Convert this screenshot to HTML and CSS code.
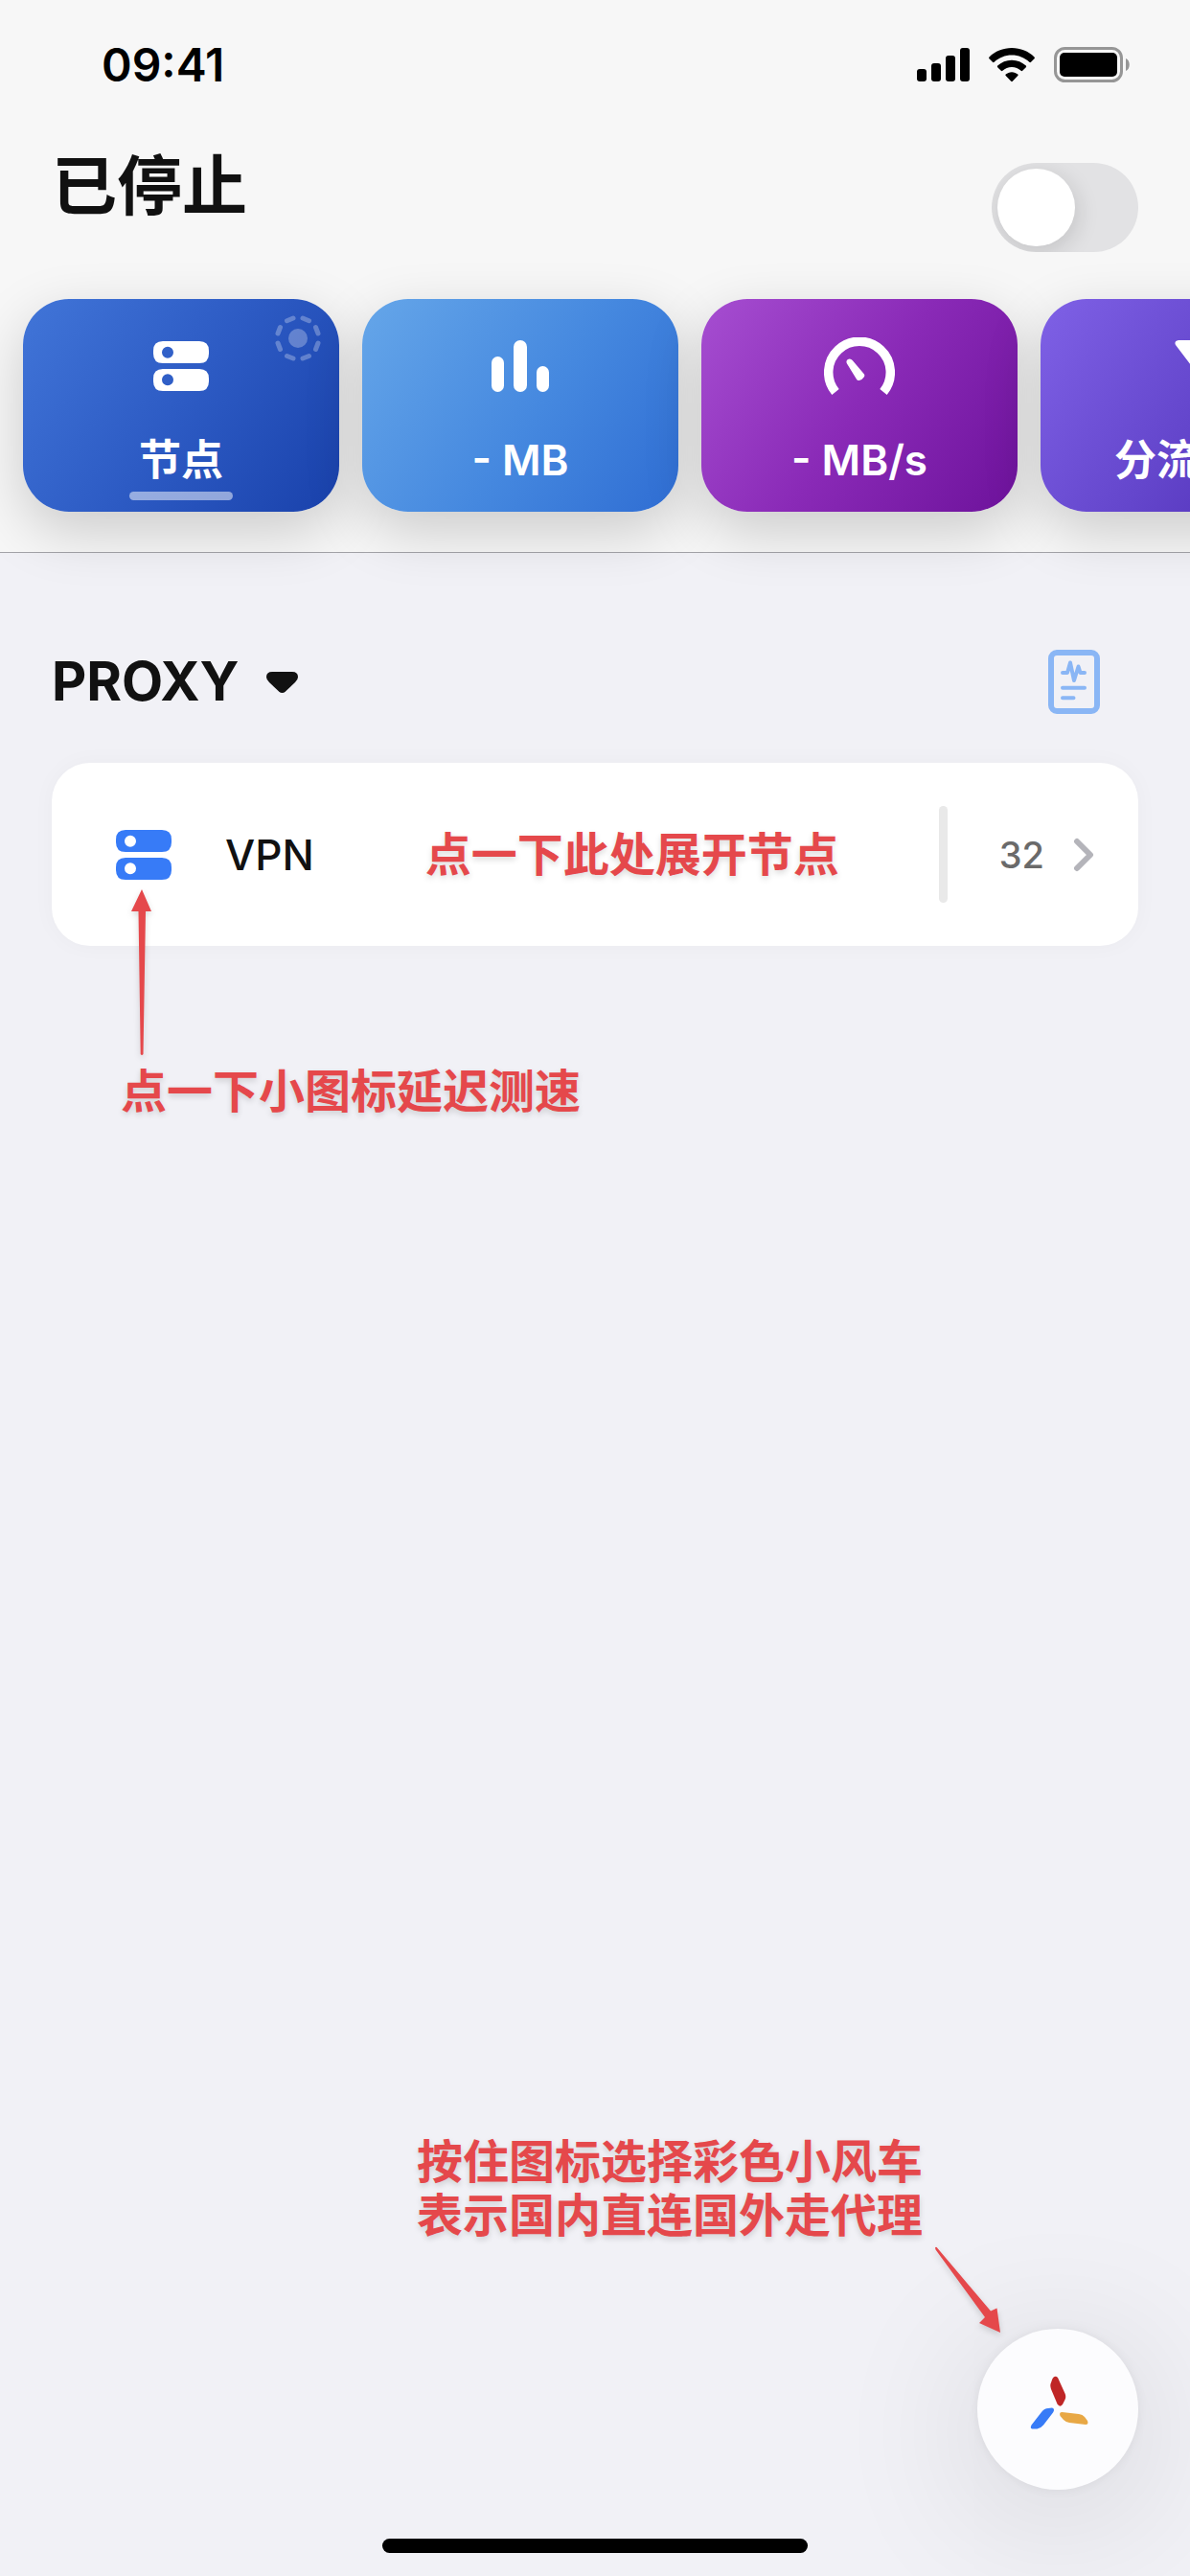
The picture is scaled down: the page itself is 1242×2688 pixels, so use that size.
FILE: index.html
```html
<!DOCTYPE html>
<html lang="zh-CN">
<head>
  <meta charset="UTF-8" />
  <meta name="viewport" content="width=device-width, initial-scale=1.0" />
  <title>节点</title>
  <link rel="stylesheet" href="styles.css">
</head>
<body>
  <header class="top">
    <div class="status-bar">
      <span class="time">09:41</span>
      <div class="status-icons">
        <svg width="55" height="36" viewBox="0 0 55 36">
          <rect x="0" y="22" width="10" height="13" rx="3" />
          <rect x="15" y="16" width="10" height="19" rx="3" />
          <rect x="30" y="8" width="10" height="27" rx="3" />
          <rect x="45" y="0" width="10" height="35" rx="3" />
        </svg>
        <svg width="48" height="36" viewBox="0 0 48 36">
          <path d="M24 0C33 0 41.500 3.500 47.500 9.500Q48.300 10.400 47.500 11.200L44 14.800Q43.200 15.500 42.300 14.800C37.400 10.200 31 7.600 24 7.600S10.600 10.200 5.700 14.800Q4.800 15.500 4 14.800L.5 11.200Q-.3 10.400.5 9.500C6.500 3.500 15 0 24 0Z" />
          <path d="M24 12.700C29.700 12.700 34.900 14.900 38.800 18.600Q39.600 19.400 38.800 20.200L35.200 23.800Q34.400 24.500 33.600 23.800C31 21.400 27.700 20 24 20S17 21.400 14.400 23.800Q13.600 24.500 12.800 23.800L9.200 20.200Q8.400 19.400 9.200 18.600C13.100 14.900 18.300 12.700 24 12.700Z" />
          <path d="M24 25.200C26.500 25.200 28.600 26.100 30.300 27.600Q31.100 28.300 30.300 29.100L24.800 34.800Q24 35.600 23.200 34.800L17.700 29.100Q16.900 28.300 17.700 27.600C19.400 26.100 21.500 25.200 24 25.200Z" />
        </svg>
        <svg width="80" height="38" viewBox="0 0 80 38">
          <rect x="1.500" y="1.500" width="69" height="34" rx="10" fill="none" stroke="#969696" stroke-width="3" />
          <rect x="6" y="6" width="60" height="25" rx="5" />
          <path d="M75 12C80 14 80 23 75 25Z" fill="#969696" />
        </svg>
      </div>
    </div>

    <div class="title-row">
      <label class="title" for="power">已停止</label>
      <input class="switch" type="checkbox" id="power" />
    </div>

    <nav class="tiles">
      <button class="tile tile-node active">
        <svg width="58" height="52" viewBox="0 0 58 52">
          <path fill="currentColor" fill-rule="evenodd" d="M10 0H48Q58 0 58 10V13Q58 23 48 23H10Q0 23 0 13V10Q0 0 10 0ZM15 5.700A6 6 0 1 0 15 17.700A6 6 0 1 0 15 5.700ZM10 29H48Q58 29 58 39V42Q58 52 48 52H10Q0 52 0 42V39Q0 29 10 29ZM15 34.200A6 6 0 1 0 15 46.200A6 6 0 1 0 15 34.200Z" />
        </svg>
        <span>节点</span>
        <svg class="badge" width="50" height="50" viewBox="0 0 50 50">
          <circle cx="25" cy="25" r="10" fill="currentColor" />
          <path d="M30 4L36.500 6.700M43.500 13.500L46 20M46 30L43.500 36.500M36.500 43.500L30 46M20 46L13.500 43.500M6.500 36.500L4 30M4 20L6.500 13.500M13.500 6.700L20 4" fill="none" stroke="currentColor" stroke-width="5" stroke-linecap="round" />
        </svg>
      </button>
      <button class="tile tile-traffic">
        <svg width="60" height="54" viewBox="0 0 60 54">
          <g fill="currentColor">
            <rect x="0" y="17" width="13" height="37" rx="6.500" />
            <rect x="23" y="0" width="14" height="54" rx="7" />
            <rect x="47" y="27" width="13" height="27" rx="6.500" />
          </g>
        </svg>
        <span>- MB</span>
      </button>
      <button class="tile tile-speed">
        <svg width="74" height="60" viewBox="0 0 74 60">
          <path d="M12 57A32.300 32.300 0 1 1 62 57" fill="none" stroke="currentColor" stroke-width="9.500" />
          <path d="M24 27.500Q22.500 24.800 24.900 23Q27.600 21.500 29.700 24L42 38.500Q43 40 41.700 41.500Q40 44.200 36.800 45Q35 45.500 34 43.800Z" fill="currentColor" />
        </svg>
        <span>- MB/s</span>
      </button>
      <button class="tile tile-rule">
        <svg width="50" height="54" viewBox="0 0 50 54">
          <path d="M4 0H46Q51 1 49 5L31 30V45L20 53V30L1 5Q-1 1 4 0Z" fill="currentColor" />
        </svg>
        <span>分流规则</span>
      </button>
    </nav>
  </header>

  <main>
    <div class="group-head">
      <button class="group-name">
        PROXY
        <svg width="33" height="22" viewBox="0 0 33 22">
          <path d="M6 0H27Q33 0 33 5.500Q33 8 30 11L20 20.500Q16.500 23.500 13 20.500L3 11Q0 8 0 5.500Q0 0 6 0Z" fill="currentColor" />
        </svg>
      </button>
      <button class="report" aria-label="诊断">
        <svg width="54" height="67" viewBox="0 0 54 67" fill="none" stroke="currentColor" stroke-linecap="round" stroke-linejoin="round">
          <rect x="3" y="3" width="48" height="61" rx="6" stroke-width="6" />
          <path d="M15 24H20L23 13.500L27 32L31.500 17.500L33.500 24H38M15 39.700H38M15 50.300H26.500" stroke-width="4" />
        </svg>
      </button>
    </div>

    <div class="card">
      <button class="ping" aria-label="延迟测速">
        <svg width="58" height="52" viewBox="0 0 58 52">
          <path fill="currentColor" fill-rule="evenodd" d="M10 0H48Q58 0 58 10V13Q58 23 48 23H10Q0 23 0 13V10Q0 0 10 0ZM15 5.700A6 6 0 1 0 15 17.700A6 6 0 1 0 15 5.700ZM10 29H48Q58 29 58 39V42Q58 52 48 52H10Q0 52 0 42V39Q0 29 10 29ZM15 34.200A6 6 0 1 0 15 46.200A6 6 0 1 0 15 34.200Z" />
        </svg>
      </button>
      <a class="node-link" href="#">
        <span class="node-name">VPN</span>
        <span class="note">点一下此处展开节点</span>
        <span class="bar"></span>
        <span class="count">32</span>
        <svg width="22" height="36" viewBox="0 0 22 36">
          <path d="M4 4L18 18L4 32" fill="none" stroke="#b4b4ba" stroke-width="6" stroke-linecap="round" stroke-linejoin="round" />
        </svg>
      </a>
    </div>

    <p class="note note-ping">
      点一下小图标延迟测速
      <svg class="arrow" width="24" height="176" viewBox="0 0 24 176">
        <path d="M12 1L22 24H16L13.500 173Q12 175 10.700 173L8.500 24H1Z" fill="currentColor" />
      </svg>
    </p>
  </main>

  <footer>
    <p class="note note-mode">
      按住图标选择彩色小风车<br>
      表示国内直连国外走代理
      <svg class="arrow" width="72" height="92" viewBox="0 0 72 92">
        <path d="M1 1.500Q2 0 3.500 2L59 67.500L65.500 64.500L69 90L47 80L53 74L1.500 3.500Z" fill="currentColor" />
      </svg>
    </p>
    <button class="fab" aria-label="模式">
      <svg width="62" height="58" viewBox="0 0 62 58">
        <path d="M23.500 3Q26 -1 29 2L36.500 18.500Q38 22 36.500 25L34 30Q31 33.500 28.500 29.500L22 14Q21 11 21.500 8.500Z" fill="#bf2626" />
        <path d="M12 38Q15 34 19 34L23 33.500Q26.500 34.500 24 38.500L14 51.500Q11 55 7.500 55.500H3Q-.5 56 1.500 51.500Z" fill="#377bf7" />
        <path d="M33.500 38L51 40Q55 40.500 57 43L60 47Q61.500 51 58 51L41 49Q37.500 48.500 35 46L31.500 42Q30 38 33.500 38Z" fill="#e8a845" />
      </svg>
    </button>
    <div class="home-bar"></div>
  </footer>
</body>
</html>
```
FILE: styles.css
```css
* { margin: 0; padding: 0; box-sizing: border-box; }
body {
  min-height: 100vh;
  display: flex;
  flex-direction: column;
  background: #f1f1f6;
  color: #111;
  font-family: Inter, "Noto Sans CJK SC", sans-serif;
  overflow-x: hidden;
}
svg { display: block; flex: none; }
button {
  background: none;
  border: none;
  color: inherit;
  font: inherit;
  cursor: pointer;
}

.top {
  background: #f7f7f7;
  border-bottom: 1px solid #a4a4a9;
  padding-bottom: 42px;
}
.status-bar {
  display: flex;
  justify-content: space-between;
  align-items: center;
  padding: 38px 62px 0 106px;
  color: #000;
}
.time {
  font-size: 48px;
  font-weight: 600;
  line-height: 60px;
}
.status-icons {
  display: flex;
  align-items: center;
  gap: 20px;
}
.title-row {
  display: flex;
  justify-content: space-between;
  align-items: flex-start;
  height: 214px;
  padding: 54px 54px 0;
}
.title {
  font-size: 68px;
  font-weight: 600;
  line-height: 84px;
}
.switch {
  appearance: none;
  width: 153px;
  height: 93px;
  margin-top: 18px;
  padding: 6px;
  border-radius: 47px;
  background: #e2e2e4;
  overflow: hidden;
  cursor: pointer;
}
.switch::before {
  content: "";
  display: block;
  width: 81px;
  height: 81px;
  border-radius: 50%;
  background: #fff;
  box-shadow: 2px 6px 24px rgba(0,0,0,0.14);
}
.switch:checked { background: #377bf7; }
.switch:checked::before { margin-left: 60px; }

.tiles {
  display: flex;
  gap: 24px;
  padding: 0 24px;
  overflow-x: clip;
}
.tile {
  position: relative;
  flex: 0 0 330px;
  height: 222px;
  padding: 26px 0 24px;
  border-radius: 48px;
  color: #fff;
  font-size: 44px;
  font-weight: 600;
  line-height: 60px;
  display: grid;
  grid-template-rows: 88px 60px;
  align-content: space-between;
  place-items: center;
  box-shadow: 0 20px 60px rgba(0,0,0,0.18);
}
.tile-node { background: linear-gradient(125deg, #4175d8, #2d5bc4 50%, #1941ab); }
.tile-traffic { background: linear-gradient(125deg, #65a6e9, #4588df 55%, #2f6dd3); }
.tile-speed { background: linear-gradient(125deg, #a64ed1, #8a2ab7 50%, #6d129b); }
.tile-rule { background: linear-gradient(125deg, #7f61e6, #6446cc 50%, #4826ae); }
.tile.active::after {
  content: "";
  position: absolute;
  left: 111px;
  right: 111px;
  bottom: 12px;
  height: 9px;
  border-radius: 5px;
  background: rgba(255,255,255,0.5);
}
.badge {
  position: absolute;
  top: 16px;
  right: 18px;
  color: rgba(255,255,255,0.28);
}

main { padding: 0 54px; }
.group-head {
  display: flex;
  justify-content: space-between;
  align-items: center;
  padding: 99px 40px 49px 0;
}
.group-name {
  display: flex;
  align-items: center;
  gap: 28px;
  font-size: 56px;
  font-weight: 700;
  line-height: 71px;
}
.report { color: #8ab6f5; }
.card {
  display: flex;
  align-items: center;
  height: 191px;
  padding: 0 46px 0 67px;
  border-radius: 40px;
  background: #fff;
  box-shadow: 0 0 24px rgba(0,0,0,0.03);
}
.ping { color: #377bf7; }
.node-link {
  flex: 1;
  display: flex;
  align-items: center;
  padding-left: 56px;
  color: inherit;
  text-decoration: none;
}
.node-name {
  font-size: 44px;
  font-weight: 500;
}
.note {
  color: #e5484b;
  font-size: 48px;
  font-weight: 600;
  line-height: 56px;
  white-space: nowrap;
  text-shadow: 0 3px 6px rgba(0,0,0,0.15);
}
.node-link .note { margin: 0 auto 0 116px; }
.bar {
  width: 9px;
  height: 101px;
  margin-right: 54px;
  border-radius: 5px;
  background: #e9e9e9;
}
.count {
  margin-right: 30px;
  color: #6a6a6a;
  font-size: 38px;
  font-weight: 500;
}
.note-ping {
  position: relative;
  padding: 124px 0 0 72px;
}
.arrow {
  position: absolute;
  filter: drop-shadow(0 3px 3px rgba(0,0,0,0.15));
}
.note-ping .arrow {
  top: -60px;
  left: 82px;
}

footer {
  display: flex;
  flex-direction: column;
  margin-top: auto;
  padding: 0 54px 24px;
}
.note-mode {
  position: relative;
  align-self: flex-end;
  margin-right: 225px;
}
.note-mode .arrow {
  top: 116px;
  left: 100%;
  margin-left: 12px;
}
.fab {
  align-self: flex-end;
  display: grid;
  place-items: center;
  width: 168px;
  height: 168px;
  margin: 90px 0 51px;
  padding: 0 0 12px 4px;
  border-radius: 50%;
  background: #fcfcfe;
  box-shadow: 0 0 12px rgba(0,0,0,0.06), 0 24px 160px rgba(0,0,0,0.14);
}
.home-bar {
  align-self: center;
  width: 444px;
  height: 15px;
  border-radius: 8px;
  background: #000;
}
```
